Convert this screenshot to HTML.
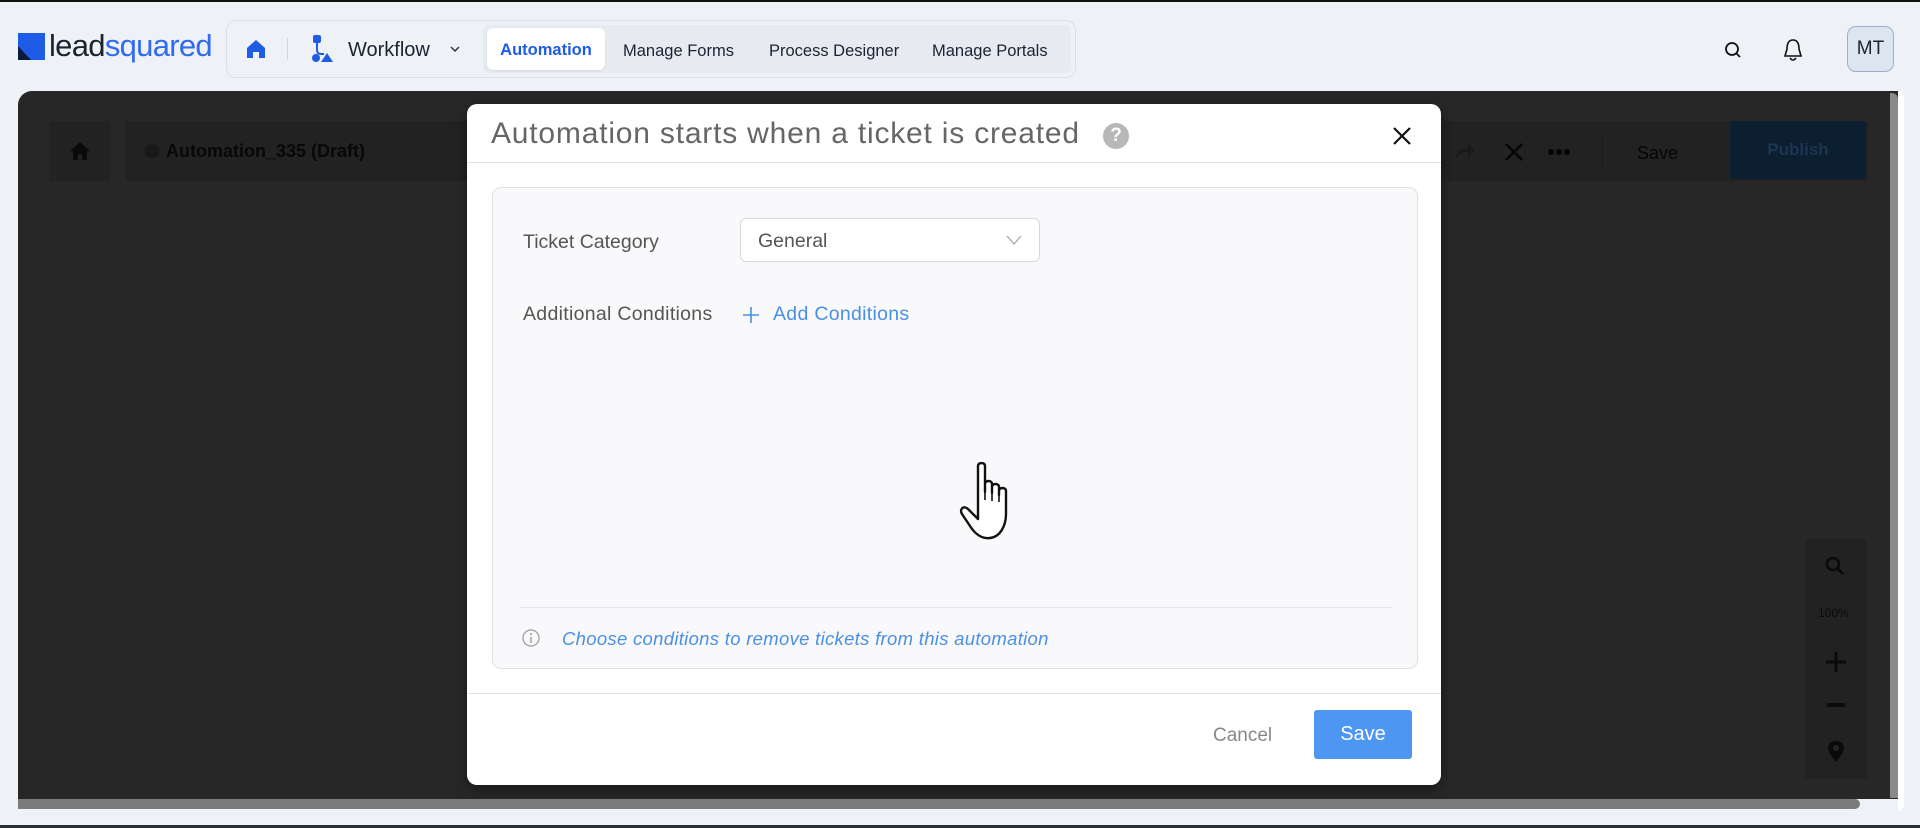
<!DOCTYPE html>
<html><head><meta charset="utf-8"><style>
*{box-sizing:border-box;margin:0;padding:0}
body{width:1920px;height:828px;overflow:hidden;background:#eef1f5;font-family:"Liberation Sans",sans-serif;position:relative}
.abs{position:absolute}
</style></head><body>
<div class="abs" style="left:0;top:0;width:1920px;height:2px;background:#111"></div>
<div class="abs" style="left:0;top:825px;width:1920px;height:3px;background:#2a2f36"></div>

<!-- logo -->
<div class="abs" style="left:18px;top:33px;width:27px;height:27px;background:#1f5ce6"></div>
<div class="abs" style="left:18px;top:46px;width:0;height:0;border-left:13px solid #0d1b3a;border-top:14px solid transparent"></div>
<div class="abs" style="left:49px;top:28px;font-size:31px;letter-spacing:-0.7px;color:#1b2333;line-height:36px">lead<span style="color:#2f6bf0">squared</span></div>

<!-- nav pill -->
<div class="abs" style="left:226px;top:20px;width:850px;height:58px;border:1px solid #d9e0ea;border-radius:10px;background:#eef1f5"></div>
<div class="abs" style="left:483px;top:25px;width:588px;height:48px;background:#e7ebf1;border-radius:6px"></div>
<svg class="abs" style="left:245px;top:38px" width="22" height="22" viewBox="0 0 22 22"><path d="M11 2 L20 10 V20 H14 V14 H8 V20 H2 V10 Z" fill="#1f5ce6"/></svg>
<div class="abs" style="left:287px;top:38px;width:1px;height:22px;background:#cfd6e0"></div>
<svg class="abs" style="left:310px;top:34px" width="26" height="30" viewBox="0 0 26 30"><rect x="3" y="1" width="8" height="8" rx="2" fill="#1f5ce6"/><path d="M7 9 V16 Q7 20 11 20 H14" stroke="#1f5ce6" stroke-width="2" fill="none"/><circle cx="6" cy="24" r="4" fill="#1f5ce6"/><path d="M17 19 L23 28 H11 Z" fill="#1f5ce6"/></svg>
<div class="abs" style="left:348px;top:39px;font-size:20px;color:#1b2333">Workflow</div>
<svg class="abs" style="left:449px;top:45px" width="12" height="8" viewBox="0 0 12 8"><path d="M2 2 L6 6 L10 2" stroke="#333" stroke-width="1.5" fill="none"/></svg>
<div class="abs" style="left:487px;top:28px;width:118px;height:42px;background:#fff;border-radius:6px;box-shadow:0 1px 2px rgba(0,0,0,.08)"></div>
<div class="abs" style="left:487px;top:41px;width:118px;text-align:center;font-size:16.5px;font-weight:bold;color:#1f5ce6">Automation</div>
<div class="abs" style="left:623px;top:42px;font-size:16.5px;color:#1b2333">Manage Forms</div>
<div class="abs" style="left:769px;top:42px;font-size:16.5px;color:#1b2333">Process Designer</div>
<div class="abs" style="left:932px;top:42px;font-size:16.5px;color:#1b2333">Manage Portals</div>

<!-- right icons -->
<svg class="abs" style="left:1723px;top:40px" width="20" height="20" viewBox="0 0 20 20"><circle cx="9" cy="9" r="6" stroke="#111" stroke-width="1.8" fill="none"/><path d="M13 13 L17 17" stroke="#111" stroke-width="1.8"/></svg>
<svg class="abs" style="left:1782px;top:37px" width="22" height="26" viewBox="0 0 22 26"><path d="M11 3 C6 3 5 8 5 12 L3 19 H19 L17 12 C17 8 16 3 11 3 Z M8 21 Q11 25 14 21" stroke="#111" stroke-width="1.6" fill="none"/></svg>
<div class="abs" style="left:1847px;top:26px;width:47px;height:46px;background:#dde5f0;border:1px solid #9fb0c6;border-radius:9px;text-align:center;line-height:44px;font-size:19px;color:#1b2333">MT</div>

<!-- dark canvas -->
<div class="abs" style="left:18px;top:91px;width:1880px;height:708px;background:#272727;border-radius:14px 0 0 0"></div>
<div class="abs" style="left:1890px;top:93px;width:8px;height:705px;background:#8a8a8a;border-radius:0 6px 0 0"></div>
<div class="abs" style="left:1898px;top:91px;width:6px;height:720px;background:#fff;border-radius:0 8px 8px 0"></div>
<div class="abs" style="left:18px;top:799px;width:1842px;height:10px;background:#7b7b7b;border-radius:0 5px 5px 0"></div>
<div class="abs" style="left:49px;top:121px;width:61px;height:60px;background:#222"></div>
<svg class="abs" style="left:69px;top:140px" width="22" height="22" viewBox="0 0 22 22"><path d="M11 2 L21 11 H18 V20 H13 V14 H9 V20 H4 V11 H1 Z" fill="#0a0a0a"/></svg>
<div class="abs" style="left:125px;top:121px;width:1743px;height:60px;background:#222"></div>
<div class="abs" style="left:145px;top:144px;width:14px;height:14px;border-radius:50%;background:#181818"></div>
<div class="abs" style="left:166px;top:141px;font-size:18px;font-weight:bold;color:#080808">Automation_335 (Draft)</div>
<svg class="abs" style="left:1454px;top:140px" width="22" height="20" viewBox="0 0 22 20"><path d="M2 18 Q3 8 14 8 V3 L21 10 L14 17 V12 Q6 12 2 18 Z" fill="#1a1a1a"/></svg>
<svg class="abs" style="left:1504px;top:142px" width="20" height="20" viewBox="0 0 20 20"><path d="M2 2 L18 18 M18 2 L2 18" stroke="#050505" stroke-width="2.4"/></svg>
<svg class="abs" style="left:1547px;top:148px" width="24" height="8" viewBox="0 0 24 8"><circle cx="4" cy="4" r="3" fill="#050505"/><circle cx="12" cy="4" r="3" fill="#050505"/><circle cx="20" cy="4" r="3" fill="#050505"/></svg>
<div class="abs" style="left:1602px;top:136px;width:1px;height:36px;background:#1c1c1c"></div>
<div class="abs" style="left:1637px;top:143px;font-size:18px;color:#050505">Save</div>
<div class="abs" style="left:1730px;top:121px;width:136px;height:58px;background:#0b1f30;border-radius:2px;text-align:center;line-height:58px;font-size:17px;font-weight:bold;color:#1c3550">Publish</div>
<div class="abs" style="left:1805px;top:539px;width:62px;height:240px;background:#222"></div>
<svg class="abs" style="left:1824px;top:555px" width="22" height="22" viewBox="0 0 22 22"><circle cx="9" cy="9" r="6" stroke="#0a0a0a" stroke-width="2.5" fill="none"/><path d="M13 13 L19 19" stroke="#0a0a0a" stroke-width="3"/></svg>
<div class="abs" style="left:1818px;top:606px;font-size:12px;color:#0a0a0a">100%</div>
<svg class="abs" style="left:1825px;top:651px" width="22" height="22" viewBox="0 0 22 22"><path d="M11 1 V21 M1 11 H21" stroke="#0a0a0a" stroke-width="3"/></svg>
<div class="abs" style="left:1827px;top:703px;width:18px;height:4px;background:#0a0a0a"></div>
<svg class="abs" style="left:1826px;top:740px" width="20" height="24" viewBox="0 0 20 24"><path d="M10 1 C4 1 2 5 2 8 C2 13 10 22 10 22 C10 22 18 13 18 8 C18 5 16 1 10 1 Z" fill="#0a0a0a"/><circle cx="10" cy="8" r="3" fill="#222"/></svg>

<!-- modal -->
<div class="abs" style="left:467px;top:104px;width:974px;height:681px;background:#fff;border-radius:10px;box-shadow:0 4px 12px rgba(0,0,0,.4)"></div>
<div class="abs" style="left:491px;top:117px;font-size:30px;letter-spacing:0.8px;color:#666">Automation starts when a ticket is created</div>
<div class="abs" style="left:1103px;top:123px;width:26px;height:26px;border-radius:50%;background:#b7b7b7;color:#fff;font-weight:bold;text-align:center;line-height:26px;font-size:19px">?</div>
<svg class="abs" style="left:1392px;top:126px" width="20" height="20" viewBox="0 0 20 20"><path d="M2 2 L18 18 M18 2 L2 18" stroke="#111" stroke-width="2.2"/></svg>
<div class="abs" style="left:467px;top:162px;width:974px;height:1px;background:#e2e2e2"></div>
<div class="abs" style="left:492px;top:187px;width:926px;height:482px;background:#f9f9fb;border:1px solid #e1e1e4;border-radius:9px"></div>
<div class="abs" style="left:523px;top:231px;font-size:19.5px;color:#555">Ticket Category</div>
<div class="abs" style="left:740px;top:218px;width:300px;height:44px;background:#fff;border:1px solid #d8d8d8;border-radius:6px"></div>
<div class="abs" style="left:758px;top:230px;font-size:19.5px;color:#555">General</div>
<svg class="abs" style="left:1006px;top:234px" width="16" height="12" viewBox="0 0 16 12"><path d="M1 2 L8 10 L15 2" stroke="#aaa" stroke-width="1.3" fill="none"/></svg>
<div class="abs" style="left:523px;top:303px;font-size:19.5px;letter-spacing:0.3px;color:#555">Additional Conditions</div>
<svg class="abs" style="left:742px;top:306px" width="18" height="18" viewBox="0 0 18 18"><path d="M9 1 V17 M1 9 H17" stroke="#4a90e2" stroke-width="1.6"/></svg>
<div class="abs" style="left:773px;top:303px;font-size:19.5px;letter-spacing:0.3px;color:#4a90e2">Add Conditions</div>
<div class="abs" style="left:520px;top:607px;width:872px;height:1px;background:#e6e6e6"></div>
<svg class="abs" style="left:522px;top:629px" width="18" height="18" viewBox="0 0 18 18"><circle cx="9" cy="9" r="8" stroke="#999" stroke-width="1.2" fill="none"/><path d="M9 8 V14" stroke="#999" stroke-width="1.4"/><circle cx="9" cy="5" r="1" fill="#999"/></svg>
<div class="abs" style="left:562px;top:628px;font-size:18.5px;letter-spacing:0.3px;font-style:italic;color:#4a90e2">Choose conditions to remove tickets from this automation</div>
<div class="abs" style="left:467px;top:693px;width:974px;height:1px;background:#e2e2e2"></div>
<div class="abs" style="left:1213px;top:725px;font-size:19px;color:#888">Cancel</div>
<div class="abs" style="left:1314px;top:710px;width:98px;height:49px;background:#4d97f3;border-radius:3px;text-align:center;line-height:48px;font-size:20px;color:#fff">Save</div>

<!-- hand cursor -->
<svg class="abs" style="left:958px;top:462px" width="64" height="80" viewBox="0 0 64 80"><path d="M20 4 C20 0 27 0 27 4 V30 V22 C27 18 34 18 34 22 V31 V25 C34 21 41 21 41 25 V33 V29 C41 25 48 25 48 29 V52 C48 64 42 75 32 76 C24 77 17 72 12 64 L4 52 C1 47 6 43 10 47 L20 57 Z" fill="#fff" stroke="#111" stroke-width="2.4" stroke-linejoin="round"/><path d="M27 30 V38 M34 31 V39 M41 33 V40" stroke="#111" stroke-width="1.6"/></svg>
</body></html>
